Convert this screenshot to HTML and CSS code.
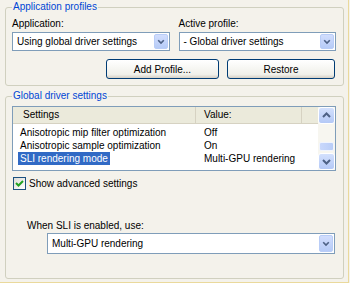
FILE: index.html
```html
<!DOCTYPE html>
<html lang="en">
<head>
  <meta charset="UTF-8">
  <title>Profiles</title>
  <link rel="stylesheet" href="styles.css">
</head>
<body>
<div class="page">

  <!-- application profiles -->
  <fieldset class="group group-profiles">
    <legend>Application profiles</legend>
    <div class="cols">
      <div class="col">
        <div class="field-label">Application:</div>
        <div class="combo">
          <span class="combo-text">Using global driver settings</span>
          <span class="combo-btn"><svg viewBox="0 0 15 17" width="15" height="17"><polyline points="4,7 7.5,10.5 11,7"/></svg></span>
        </div>
      </div>
      <div class="col">
        <div class="field-label">Active profile:</div>
        <div class="combo">
          <span class="combo-text">- Global driver settings</span>
          <span class="combo-btn"><svg viewBox="0 0 15 17" width="15" height="17"><polyline points="4,7 7.5,10.5 11,7"/></svg></span>
        </div>
      </div>
    </div>
    <div class="btn-row">
      <button class="btn btn-add">Add Profile...</button>
      <button class="btn btn-restore">Restore</button>
    </div>
  </fieldset>

  <!-- global settings -->
  <fieldset class="group group-settings">
    <legend>Global driver settings</legend>
    <div class="listview">
      <div class="lv-main">
        <div class="lv-header">
          <span class="hd hd-settings">Settings</span>
          <span class="hd hd-value">Value:</span>
          <span class="hd hd-rest"></span>
        </div>
        <div class="lv-rows">
          <div class="lv-row"><span class="c1"><span class="txt">Anisotropic mip filter optimization</span></span><span class="c2">Off</span></div>
          <div class="lv-row"><span class="c1"><span class="txt">Anisotropic sample optimization</span></span><span class="c2">On</span></div>
          <div class="lv-row"><span class="c1"><span class="txt selected">SLI rendering mode</span></span><span class="c2">Multi-GPU rendering</span></div>
        </div>
      </div>
      <div class="scrollbar">
        <span class="sb-btn"><svg viewBox="0 0 15 15" width="15" height="15"><polyline points="4,9 7.5,5.5 11,9"/></svg></span>
        <span class="sb-track"><span class="sb-thumb"></span></span>
        <span class="sb-btn"><svg viewBox="0 0 15 15" width="15" height="15"><polyline points="4,6 7.5,9.5 11,6"/></svg></span>
      </div>
    </div>

    <div class="check-row">
      <span class="checkbox"><svg viewBox="0 0 11 11" width="11" height="11"><polyline points="2,5 4.5,7.5 9,3"/></svg></span>
      <span>Show advanced settings</span>
    </div>

    <div class="sli-label">When SLI is enabled, use:</div>
    <div class="combo combo-sli">
      <span class="combo-text">Multi-GPU rendering</span>
      <span class="combo-btn"><svg viewBox="0 0 15 17" width="15" height="17"><polyline points="4,7 7.5,10.5 11,7"/></svg></span>
    </div>
  </fieldset>

</div>
</body>
</html>
```

FILE: styles.css
```css
body {
  margin: 0;
  font-family: "Liberation Sans", Arial, sans-serif;
  font-size: 10px;
  color: #000;
  background-color: #f4f2eb;
}

.page {
  width: 349px;
  height: 283px;
  box-sizing: border-box;
  padding-left: 5px;
  border-right: 1px solid #ead99c;
  border-bottom: 1px solid #ead99c;
  background-color: #f4f2eb;
}

/* group boxes */
.group {
  margin: 0;
  width: 339px;
  box-sizing: border-box;
  border: 1px solid #d0d0bf;
  border-radius: 3px;
  padding: 0 7px 6px 6px;
  min-inline-size: auto;
}

.group legend {
  padding: 0 1px;
  line-height: 14px;
  color: #0046d5;
}

.group-settings {
  margin-top: 3px;
  height: 190px;
}

.cols {
  display: flex;
  gap: 9px;
  margin-top: 3px;
}

.col {
  width: 158px;
}

.field-label {
  line-height: 14px;
}

/* combo box */
.combo {
  display: flex;
  align-items: center;
  height: 19px;
  margin-top: 1px;
  box-sizing: border-box;
  border: 1px solid #7f9db9;
  background-color: #fff;
  padding: 1px;
}

.combo-text {
  flex: 1;
  padding-left: 3px;
  white-space: nowrap;
  overflow: hidden;
}

.combo-btn {
  width: 14px;
  height: 15px;
  box-sizing: border-box;
  border: 1px solid #b9cdf7;
  border-radius: 2px;
  background: linear-gradient(#d2defd, #b6cbf7);
  display: flex;
  align-items: center;
  justify-content: center;
  overflow: hidden;
}

.combo-btn svg polyline,
.sb-btn svg polyline {
  fill: none;
  stroke: #4d6185;
  stroke-width: 2;
}

.combo-sli {
  width: 288px;
  height: 21px;
  margin-left: 35px;
  margin-top: 0;
}

.combo-sli .combo-btn {
  height: 17px;
}

/* buttons */
.btn-row {
  display: flex;
  justify-content: flex-end;
  gap: 8px;
  margin-top: 8px;
}

.btn {
  height: 20px;
  box-sizing: border-box;
  border: 1px solid #003c74;
  border-radius: 3px;
  background: linear-gradient(#ffffff, #f0f0ea 80%, #d6d0c5);
  font-family: inherit;
  font-size: 10px;
  color: #000;
  padding: 0;
}

.btn-add { width: 113px; }
.btn-restore { width: 108px; margin-right: 1px; }

/* list view */
.listview {
  display: flex;
  width: 324px;
  height: 65px;
  margin-top: 3px;
  box-sizing: border-box;
  border: 1px solid #7f9db9;
  background-color: #fff;
}

.lv-main {
  flex: 1;
  overflow: hidden;
}

.lv-header {
  display: flex;
  height: 17px;
  background-color: #ebeadb;
  border-bottom: 1px solid #d6d2c2;
  box-sizing: border-box;
  line-height: 16px;
}

.hd {
  box-sizing: border-box;
  border-right: 1px solid #d6d2c2;
}

.hd-settings { width: 183px; padding-left: 10px; }
.hd-value { width: 106px; padding-left: 8px; }
.hd-rest { flex: 1; border-right: none; }

.lv-rows {
  padding-top: 2px;
}

.lv-row {
  display: flex;
  height: 13px;
  line-height: 13px;
  white-space: nowrap;
}

.c1 {
  width: 183px;
  padding-left: 5px;
  box-sizing: border-box;
}

.c1 .txt {
  padding: 0 2px;
  display: inline-block;
}

.c1 .selected {
  background-color: #316ac5;
  color: #fff;
}

.c2 {
  padding-left: 8px;
}

/* scroll bar */
.scrollbar {
  width: 17px;
  display: flex;
  flex-direction: column;
  background-color: #f7f6f0;
}

.sb-btn {
  width: 17px;
  height: 17px;
  box-sizing: border-box;
  border: 1px solid #fff;
  border-radius: 3px;
  background: linear-gradient(#d3e0fd, #b4c9f6);
  display: flex;
  align-items: center;
  justify-content: center;
}

.sb-track {
  flex: 1;
  display: flex;
  flex-direction: column;
  justify-content: flex-end;
  padding-bottom: 2px;
}

.sb-thumb {
  height: 7px;
  margin: 0 1px;
  border-radius: 2px;
  background: linear-gradient(90deg, #c9d8fc, #b9cdf7);
  border: 1px solid #f0f4fe;
}

/* check box */
.check-row {
  display: flex;
  align-items: center;
  gap: 3px;
  margin-top: 6px;
  margin-left: 1px;
  height: 13px;
}

.checkbox {
  width: 13px;
  height: 13px;
  box-sizing: border-box;
  border: 1px solid #1c5180;
  background: linear-gradient(135deg, #dcdcd7, #ffffff);
  display: flex;
  align-items: center;
  justify-content: center;
}

.checkbox polyline {
  fill: none;
  stroke: #21a121;
  stroke-width: 2;
}

.sli-label {
  margin-top: 29px;
  margin-left: 15px;
  line-height: 14px;
}
```
